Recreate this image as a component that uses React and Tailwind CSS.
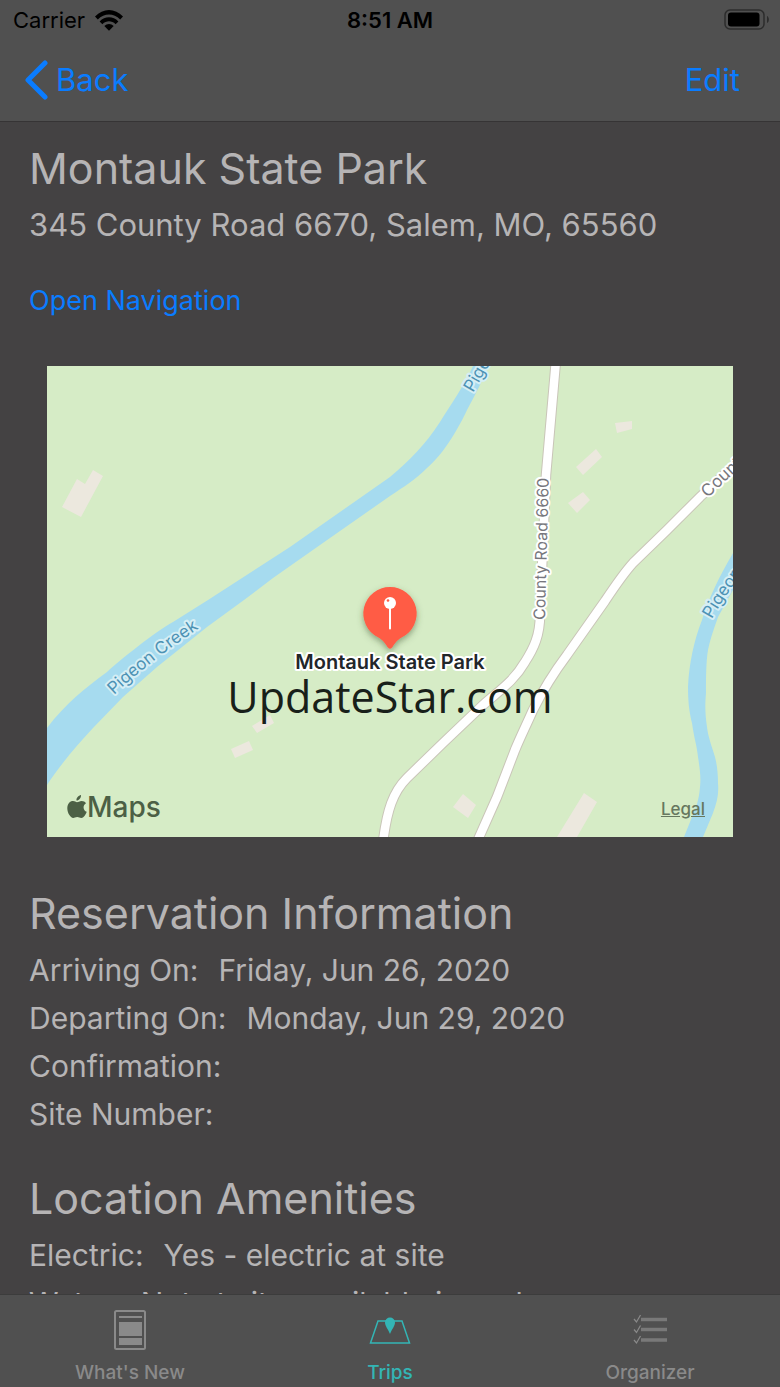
const label = { paintOrder: "stroke" };

function StatusBar() {
  return (
    <div className="grid h-10 grid-cols-3 items-center px-2.5 text-[22px] leading-6 text-black">
      <div className="flex items-center gap-2.5 pl-[3px]">
        <span>Carrier</span>
        <svg aria-hidden="true" className="w-7 h-[21px]" viewBox="0 0 28 21">
          <path d="M0 6.600C8-2.200 20-2.200 28 6.600L25.200 9.400C18.600 2.800 9.400 2.800 2.800 9.400Z" />
          <path d="M4.600 11.400C10 5.800 18 5.800 23.400 11.400L20.600 14.200C16.600 10.400 11.400 10.400 7.400 14.200Z" />
          <path d="M9.300 16.100C12 13.400 16 13.400 18.700 16.100L14 20.800Z" />
        </svg>
      </div>
      <div className="text-center font-semibold">8:51 AM</div>
      <svg aria-hidden="true" className="h-[22px] w-[46px] justify-self-end" viewBox="0 0 46 22">
        <rect x="1" y="1" width="39" height="19" rx="5" fill="none" stroke="#2c2c2c" strokeWidth="1.500" />
        <rect x="4" y="3.500" width="31.500" height="14" rx="3" />
        <path d="M43 7C45.500 8 45.500 13 43 14Z" fill="#2c2c2c" />
      </svg>
    </div>
  );
}

function ParkMap() {
  return (
    <figure className="relative mx-[18px] mt-[47px] overflow-hidden">
      <svg className="block w-full" viewBox="47 366 686 471" role="img" aria-label="Map of Montauk State Park">
        <defs>
          <path id="creek-west" d="M114 695Q150 661 198 629" />
          <path id="creek-north" d="M473 393L501 345" />
          <path id="creek-east" d="M712 619Q721 602 746 568" />
          <path id="road-6660" d="M545 620L549 470" />
          <path id="road-east" d="M708 498Q730 476 770 441" />
          <filter id="pin-shadow" x="-30%" y="-30%" width="160%" height="160%">
            <feDropShadow dx="0" dy="3" stdDeviation="3" floodColor="#40552f" floodOpacity="0.5" />
          </filter>
        </defs>
        <rect x="47" y="366" width="686" height="471" fill="#d6ecc6" />
        <g fill="#ece8de">
          <path d="M62 507L77 479L85 484L93 470L103 476L81 517Z" />
          <path d="M615 423L632 421L632 429L617 433Z" />
          <path d="M576 467L596 449L602 457L583 475Z" />
          <path d="M568 503L583 492L590 500L577 513Z" />
          <path d="M252 726L270 715L274 723L257 733Z" />
          <path d="M231 749L249 741L253 750L235 758Z" />
          <path d="M453 807L463 794L476 805L468 818Z" />
          <path d="M557 837L584 793L597 802L577 837Z" />
        </g>
        <g fill="#a6dbef">
          <path d="M47 728C65 704 85 688 107 672C120 660 155 632 173 622L208 600L290 547L360 498L390 477C410 460 425 445 440 422C450 406 464 386 473 366H488C483 380 476 393 467 410C460 425 445 453 427 468C415 480 405 486 390 496L330 538L273 578L244 600L207 627L157 667L123 697L93 728C78 744 60 765 47 785Z" />
          <path d="M733 553C720 575 708 600 702 620C694 640 689 664 688 687C688 705 690 715 692 723C694 738 697 746 698 757C700 770 701 778 700 787C699 800 696 808 692 817L684 837H703L713 813C717 802 719 794 718 783C718 773 717 765 715 757C711 744 708 736 707 727C705 713 705 705 706 693C706 678 706 662 708 650C711 636 715 626 718 617L733 590Z" />
        </g>
        {[
          ["#c9c5b8", 10.5],
          ["#ffffff", 8.5],
        ].map(([stroke, width]) => (
          <g key={stroke} fill="none" stroke={stroke} strokeWidth={width}>
            <path d="M556 360L546 475L540 615C540 635 534 648 525 662C514 681 500 690 483 705L443 743L407 778C393 792 387 810 383 842" />
            <path d="M740 460L700 497L667 530L633 563C623 574 615 586 605 601L567 655C555 671 544 688 533 710C524 730 520 738 515 750L497 797L477 842" />
          </g>
        ))}
        <g className="font-['Inter',sans-serif]" fontSize="17" strokeWidth="4" strokeLinejoin="round">
          <g fill="#4d92b4" stroke="#d5eef5">
            <text style={label}><textPath href="#creek-west">Pigeon Creek</textPath></text>
            <text style={label}><textPath href="#creek-north">Pigeon</textPath></text>
            <text style={label}><textPath href="#creek-east">Pigeon</textPath></text>
          </g>
          <g fill="#77777d" stroke="#ffffff">
            <text fontSize="16" style={label}><textPath href="#road-6660">County Road 6660</textPath></text>
            <text style={label}><textPath href="#road-east">County</textPath></text>
          </g>
        </g>
        <path filter="url(#pin-shadow)" fill="#ff5b45" d="M390 587A26.500 26.500 0 0 1 402 637.200C397 640 395 643 392.500 647Q390 650.500 387.500 647C385 643 383 640 378 637.200A26.500 26.500 0 0 1 390 587Z" />
        <path d="M390 606V628.500" stroke="#fff" strokeWidth="2" strokeLinecap="round" />
        <circle cx="390" cy="603" r="6" fill="#fff" />
        <circle cx="388" cy="600.500" r="1.300" fill="#ff5b45" />
        <text x="390" y="669" textAnchor="middle" className="font-['Inter',sans-serif]" fontSize="20" fontWeight="600" fill="#22262a" stroke="#fff" strokeWidth="4" strokeLinejoin="round" style={label}>
          Montauk State Park
        </text>
        <text x="390" y="713" textAnchor="middle" className="font-['Open_Sans',sans-serif]" fontSize="43" fill="#182019">
          UpdateStar.com
        </text>
      </svg>
      <div className="absolute bottom-3 left-5 flex items-center text-[28px] leading-9 font-medium text-[#4c6045]">
        <svg aria-hidden="true" className="h-6 w-5" viewBox="0 0 20 24" fill="currentColor">
          <path d="M14 0C14.300 3 12 5.600 9.500 5.500C9.200 2.900 11.500 .5 14 0ZM10 7.200C11.200 7.200 12.500 5.900 14.700 5.900C16.500 5.900 18.100 6.800 19 8.200C15.400 10.300 16 15.300 19.700 16.800C18.700 19.800 16.600 23 14.300 23C12.700 23 12 22.100 10.200 22.100C8.400 22.100 7.500 23 6.200 23C3.500 23 .3 18 .3 13.300C.3 8.700 3 6 6 6C7.800 6 9 7.200 10 7.200Z" />
        </svg>
        Maps
      </div>
      <a href="#legal" className="absolute right-7 bottom-4 text-[17px] leading-6 font-medium text-[#66775e] underline">Legal</a>
    </figure>
  );
}

function Field({ name, value }) {
  return (
    <div className="flex gap-5">
      <dt>{name}:</dt>
      <dd>{value}</dd>
    </div>
  );
}

function Section({ title, fields }) {
  return (
    <section>
      <h2 className="text-[43px] leading-[60px]">{title}</h2>
      <dl className="mt-[3px] text-[30px] leading-[48px]">
        {fields.map(([name, value]) => (
          <Field key={name} name={name} value={value} />
        ))}
      </dl>
    </section>
  );
}

function Tab({ name, active, children }) {
  return (
    <a
      href={"#" + name}
      aria-current={active ? "page" : undefined}
      className={"flex flex-1 flex-col items-center " + (active ? "text-[#33b5b5]" : "text-[#8a8a8a]")}
    >
      <svg aria-hidden="true" className="h-[42px] w-[42px]" viewBox="0 0 42 42" fill="none" stroke="currentColor">
        {children}
      </svg>
      <span className="mt-2.5 text-[19px] leading-6 font-medium">{name}</span>
    </a>
  );
}

export default function App() {
  return (
    <div className="flex h-screen flex-col bg-[#444243] font-['Inter',sans-serif] text-[#b6b4b5]">
      <header className="border-b border-[#363435] bg-[#505050] pb-px">
        <StatusBar />
        <nav className="flex h-20 items-center justify-between pr-10 pl-6 text-[31px] leading-10 text-[#0a7cff]">
          <button type="button" className="flex items-center gap-2">
            <svg aria-hidden="true" className="h-10 w-6" viewBox="0 0 24 40" fill="none" stroke="currentColor" strokeWidth="5" strokeLinecap="round" strokeLinejoin="round">
              <path d="M21 3L4 20L21 37" />
            </svg>
            Back
          </button>
          <button type="button">Edit</button>
        </nav>
      </header>
      <main className="min-h-0 flex-1 overflow-y-auto px-[29px] pt-4 [scrollbar-width:none]">
        <h1 className="text-[43px] leading-[60px]">Montauk State Park</h1>
        <address className="mt-[3px] text-[31px] leading-[48px] not-italic">345 County Road 6670, Salem, MO, 65560</address>
        <a href="#navigation" className="mt-[34px] block w-fit text-[27px] leading-9 text-[#0a7cff]">Open Navigation</a>
        <ParkMap />
        <div className="mt-[46px] flex flex-col gap-[30px]">
          <Section
            title="Reservation Information"
            fields={[
              ["Arriving On", "Friday, Jun 26, 2020"],
              ["Departing On", "Monday, Jun 29, 2020"],
              ["Confirmation", ""],
              ["Site Number", ""],
            ]}
          />
          <Section
            title="Location Amenities"
            fields={[
              ["Electric", "Yes - electric at site"],
              ["Water", "Not at site, available in park"],
            ]}
          />
        </div>
      </main>
      <nav className="flex border-t border-[#3c3c3c] bg-[#505050] pt-3.5 pb-0.5">
        <Tab name="What's New">
          <rect x="6" y="2" width="30" height="38" rx="1.500" strokeWidth="2" />
          <path d="M10 8H33" strokeWidth="2" />
          <path d="M10 13H33V27H10ZM10 29H33V36H10Z" fill="currentColor" stroke="none" />
        </Tab>
        <Tab name="Trips" active>
          <path d="M17 12H9L1.500 34H40.500L33 12H25" strokeWidth="1.500" />
          <path d="M21 25C19 20 16 17 16 13.500A5 5 0 0 1 26 13.500C26 17 23 20 21 25Z" fill="currentColor" stroke="none" />
        </Tab>
        <Tab name="Organizer">
          <path d="M12 10.500H38M12 20.500H38M12 31H38" strokeWidth="3.500" strokeOpacity="0.700" />
          <path d="M5 10L7.500 13L11.500 6M5 20.500L7.500 23.500L11.500 16.500M5 31L7.500 34L11.500 27" strokeWidth="1.200" />
        </Tab>
      </nav>
    </div>
  );
}
